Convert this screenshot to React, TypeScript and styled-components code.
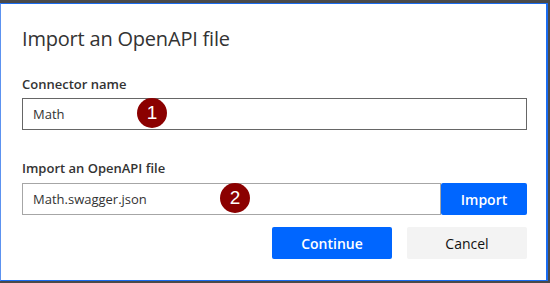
import { FC, ReactElement } from "react";
import styled, { createGlobalStyle } from "styled-components";

const GlobalStyle = createGlobalStyle`
  html, body {
    margin: 0;
    padding: 0;
    background: #4a4a4a;
  }
  body {
    font-family: "Open Sans", "Noto Sans", sans-serif;
  }
`;

const Page = styled.div`
  padding-top: 3px;
  width: 550px;
  height: 283px;
  box-sizing: border-box;
`;

const Dialog = styled.section`
  width: 548px;
  height: 278px;
  box-sizing: border-box;
  background: #fff;
  border-top: 1px solid #1a6cf0;
  border-left: 1px solid #5c92f0;
  border-right: 2px solid #1a6cf0;
  border-bottom: 1px solid #1a6cf0;
  padding: 21px 19px 0 21px;
  display: flex;
  flex-direction: column;
`;

const Title = styled.h1`
  margin: 0;
  font-size: 20px;
  line-height: 28px;
  font-weight: 400;
  color: #333;
  letter-spacing: -0.2px;
`;

const Label = styled.label<{ $top: number }>`
  display: block;
  margin-top: ${(p) => p.$top}px;
  font-size: 13px;
  line-height: 18px;
  font-weight: 600;
  color: #333;
`;

const Row = styled.div<{ $top: number }>`
  position: relative;
  display: flex;
  margin-top: ${(p) => p.$top}px;
`;

const Input = styled.div<{ $border: string }>`
  flex: 1;
  height: 32px;
  box-sizing: border-box;
  border: 1px solid ${(p) => p.$border};
  padding: 0 10px;
  display: flex;
  align-items: center;
  font-size: 13px;
  color: #333;
`;

const Badge = styled.span<{ $left: number }>`
  position: absolute;
  left: ${(p) => p.$left}px;
  top: 0;
  width: 30px;
  height: 30px;
  border-radius: 50%;
  background: #8b0000;
  color: #fff;
  font-family: "Liberation Sans", Arial, sans-serif;
  font-size: 19px;
  display: flex;
  align-items: center;
  justify-content: center;
`;

const Button = styled.button<{ $primary?: boolean; $width: number }>`
  width: ${(p) => p.$width}px;
  height: 32px;
  border: none;
  border-radius: 2px;
  font-family: inherit;
  font-size: 14px;
  font-weight: ${(p) => (p.$primary ? 600 : 400)};
  background: ${(p) => (p.$primary ? "#0066ff" : "#f3f3f3")};
  color: ${(p) => (p.$primary ? "#fff" : "#111")};
  padding: 0;
`;

const Actions = styled.div`
  display: flex;
  justify-content: flex-end;
  gap: 15px;
  margin-top: 12px;
`;

const App: FC = (): ReactElement => {
  return (
    <Page>
      <GlobalStyle />
      <Dialog>
        <Title>Import an OpenAPI file</Title>
        <Label $top={22}>Connector name</Label>
        <Row $top={5}>
          <Input $border="#666">Math</Input>
          <Badge $left={115}>1</Badge>
        </Row>
        <Label $top={29}>Import an OpenAPI file</Label>
        <Row $top={6}>
          <Input $border="#a6a6a6">Math.swagger.json</Input>
          <Badge $left={198}>2</Badge>
          <Button $primary $width={86}>Import</Button>
        </Row>
        <Actions>
          <Button $primary $width={120}>Continue</Button>
          <Button $width={120}>Cancel</Button>
        </Actions>
      </Dialog>
    </Page>
  );
};

export default App;
